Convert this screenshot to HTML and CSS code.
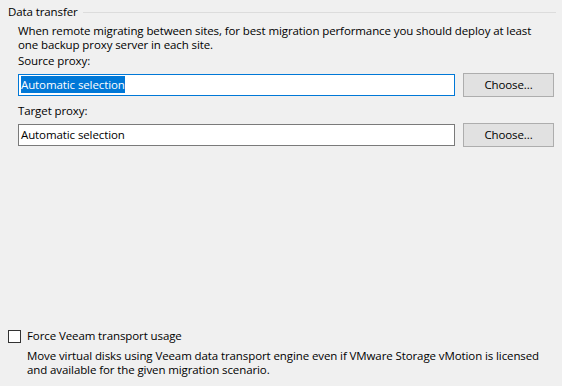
FILE: index.html
```html
<!DOCTYPE html>
<html lang="en">
<head>
    <meta charset="UTF-8">
    <meta name="viewport" content="width=device-width, initial-scale=1.0">
    <title>Data transfer</title>
    <link rel="stylesheet" href="styles.css">
</head>
<body>
    <div class="page">
        <div class="group">
            <div class="group-head">
                <span>Data transfer</span>
                <span class="group-line"></span>
            </div>
            <div class="group-body">
                <p class="note">When remote migrating between sites, for best migration performance you should deploy at least one backup proxy server in each site.</p>

                <div class="field">
                    <div class="label">Source proxy:</div>
                    <div class="row">
                        <div class="textbox focused"><span class="selected">Automatic selection</span></div>
                        <div class="button">Choose...</div>
                    </div>
                </div>

                <div class="field">
                    <div class="label">Target proxy:</div>
                    <div class="row">
                        <div class="textbox"><span>Automatic selection</span></div>
                        <div class="button">Choose...</div>
                    </div>
                </div>
            </div>
        </div>

        <div class="option">
            <div class="check-row">
                <span class="checkbox"></span>
                <span>Force Veeam transport usage</span>
            </div>
            <p class="hint">Move virtual disks using Veeam data transport engine even if VMware Storage vMotion is licensed and available for the given migration scenario.</p>
        </div>
    </div>
</body>
</html>
```

FILE: styles.css
```css
body {
    margin: 0;
    background-color: #f0f0f0;
    color: #000;
    font-family: "Open Sans", "Noto Sans", sans-serif;
    font-size: 11.5px;
    letter-spacing: -0.1px;
    line-height: 14px;
}
p {
    margin: 0;
}
.page {
    height: 386px;
    display: flex;
    flex-direction: column;
}
.group-head {
    display: flex;
    align-items: center;
    gap: 5px;
    padding: 5px 6px 0 8px;
}
.group-line {
    flex: 1;
    border-top: 1px solid #dcdcdc;
}
.group-body {
    padding: 0 8px 0 18px;
}
.note {
    margin-top: 5px;
}
.field {
    margin-top: 2px;
}
.field + .field {
    margin-top: 7px;
}
.label {
    margin-bottom: 5px;
}
.row {
    display: flex;
    align-items: center;
    gap: 8px;
    height: 24px;
}
.textbox {
    box-sizing: border-box;
    width: 437px;
    height: 22px;
    border: 1px solid #7a7a7a;
    background: #fff;
    padding: 1px 2px;
    line-height: 17px;
}
.textbox.focused {
    border-color: #0078d7;
}
.selected {
    display: inline-block;
    background: #0078d7;
    color: #fff;
}
.button {
    box-sizing: border-box;
    width: 91px;
    height: 24px;
    border: 1px solid #adadad;
    background: #e1e1e1;
    display: flex;
    align-items: center;
    justify-content: center;
}
.option {
    margin-top: auto;
    padding: 0 8px 9px 8px;
}
.check-row {
    display: flex;
    align-items: center;
    gap: 6px;
}
.checkbox {
    box-sizing: border-box;
    width: 13px;
    height: 13px;
    border: 1px solid #333;
    background: #fff;
}
.hint {
    margin-top: 6px;
    padding-left: 19px;
}
```
